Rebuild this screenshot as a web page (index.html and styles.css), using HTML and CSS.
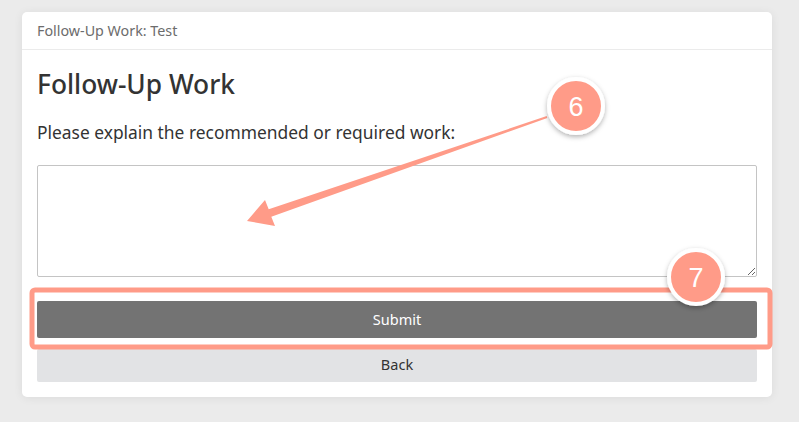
FILE: index.html
```html
<!DOCTYPE html>
<html>
<head>
<meta charset="utf-8">
<link rel="stylesheet" href="styles.css">
</head>
<body>
<div class="card">
  <div class="card-header">Follow-Up Work: Test</div>
  <div class="card-body">
    <h1 class="title">Follow-Up Work</h1>
    <p class="prompt">Please explain the recommended or required work:</p>
    <textarea class="notes"></textarea>
    <button class="btn btn-submit">Submit</button>
    <button class="btn btn-back">Back</button>
  </div>
</div>
<svg class="overlay" width="799" height="422" viewBox="0 0 799 422">
  <defs>
    <filter id="sh" x="-50%" y="-50%" width="200%" height="200%">
      <feDropShadow dx="0" dy="2" stdDeviation="2.5" flood-color="#000" flood-opacity="0.3"/>
    </filter>
  </defs>
  <rect x="32" y="290" width="738" height="57" rx="3" fill="none" stroke="#ff9b88" stroke-width="5"/>
  <polygon fill="#ff9b88" points="546.7,116.1 268.7,209.2 265,200 247,221 275,226 271.3,216.8 547.3,117.9"/>
  <g filter="url(#sh)">
    <circle cx="576" cy="106" r="27" fill="#ff9b88" stroke="#fff" stroke-width="4"/>
    <circle cx="696" cy="277" r="27" fill="#ff9b88" stroke="#fff" stroke-width="4"/>
  </g>
  <text x="576" y="115.5" class="num">6</text>
  <text x="696" y="286.5" class="num">7</text>
</svg>
</body>
</html>
```

FILE: styles.css
```css
html, body {
  margin: 0;
  padding: 0;
}
body {
  background: #ebebeb;
  width: 799px;
  height: 422px;
  overflow: hidden;
  position: relative;
  font-family: "Noto Sans", "Open Sans", sans-serif;
  color: #333;
  padding: 12px 0 0 22px;
  box-sizing: border-box;
}
.card {
  width: 750px;
  background: #fff;
  border-radius: 5px;
  box-shadow: 0 1px 10px rgba(0,0,0,0.07);
}
.card-header {
  height: 38px;
  box-sizing: border-box;
  padding: 0 15px;
  display: flex;
  align-items: center;
  font-size: 14.3px;
  color: #6c6c6c;
  border-bottom: 1px solid #ebebeb;
}
.card-body {
  padding: 19px 15px 15px;
  display: flex;
  flex-direction: column;
}
.title {
  margin: 0;
  font-size: 26.3px;
  line-height: 30px;
  font-weight: 500;
  color: #333;
}
.prompt {
  margin: 21px 0 0;
  font-size: 17.4px;
  line-height: 24px;
  color: #333;
}
.notes {
  margin: 21px 0 0;
  height: 112px;
  box-sizing: border-box;
  border: 1px solid #c4c4c4;
  border-radius: 2px;
  resize: vertical;
  font-family: inherit;
  outline: none;
}
.btn {
  border: none;
  border-radius: 2px;
  font-family: inherit;
  font-size: 14.5px;
  padding: 0;
  width: 100%;
  box-sizing: border-box;
}
.btn-submit {
  margin-top: 24px;
  height: 37px;
  padding-bottom: 2px;
  background: #737373;
  color: #fff;
}
.btn-back {
  margin-top: 11px;
  height: 33px;
  padding-bottom: 3px;
  background: #e2e3e5;
  color: #333;
}
.overlay {
  position: absolute;
  left: 0;
  top: 0;
  pointer-events: none;
}
.num {
  fill: #fff;
  font-family: "Liberation Sans", Arial, sans-serif;
  font-size: 27px;
  text-anchor: middle;
}
```
